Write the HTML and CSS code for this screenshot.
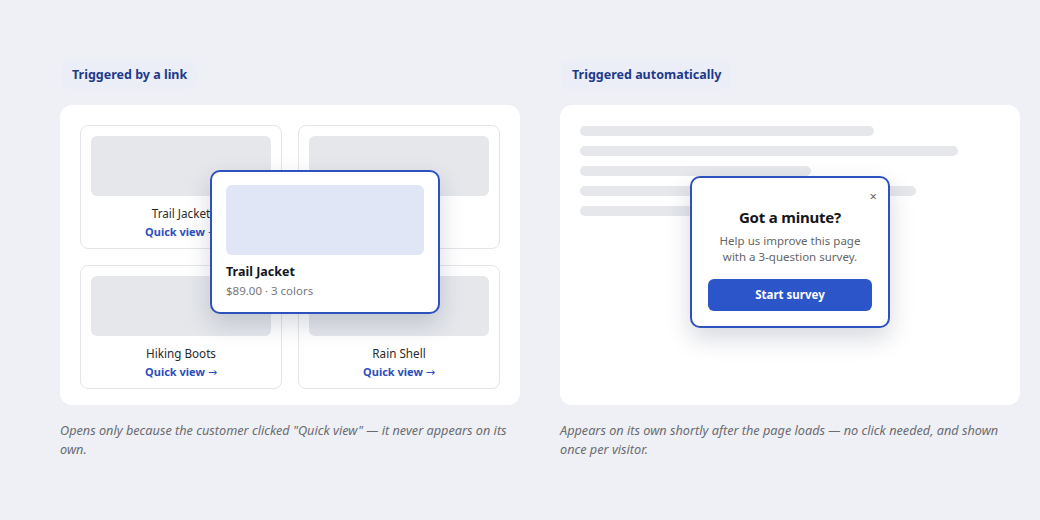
FILE: index.html
```html
<!DOCTYPE html>
<html>
<head>
<meta charset="utf-8">
<link rel="stylesheet" href="styles.css">
</head>
<body>
<div class="page">
  <section class="col">
    <div class="label">Triggered by a link</div>
    <div class="panel">
      <div class="grid">
        <div class="product"><div class="thumb"></div><div class="name">Trail Jacket</div><div class="qv">Quick view <span class="arrow">→</span></div></div>
        <div class="product"><div class="thumb"></div><div class="name">Trail Jacket</div><div class="qv">Quick view <span class="arrow">→</span></div></div>
        <div class="product"><div class="thumb"></div><div class="name">Hiking Boots</div><div class="qv">Quick view <span class="arrow">→</span></div></div>
        <div class="product"><div class="thumb"></div><div class="name">Rain Shell</div><div class="qv">Quick view <span class="arrow">→</span></div></div>
      </div>
      <div class="popover">
        <div class="pop-img"></div>
        <div class="pop-title">Trail Jacket</div>
        <div class="pop-sub">$89.00 · 3 colors</div>
      </div>
    </div>
    <p class="caption">Opens only because the customer clicked "Quick view" — it never appears on its own.</p>
  </section>
  <section class="col">
    <div class="label">Triggered automatically</div>
    <div class="panel panel-lines">
      <div class="line w1"></div>
      <div class="line w2"></div>
      <div class="line w3"></div>
      <div class="line w4"></div>
      <div class="line w5"></div>
      <div class="modal">
        <div class="close">×</div>
        <div class="modal-title">Got a minute?</div>
        <div class="modal-text">Help us improve this page with a 3-question survey.</div>
        <div class="btn">Start survey</div>
      </div>
    </div>
    <p class="caption">Appears on its own shortly after the page loads — no click needed, and shown once per visitor.</p>
  </section>
</div>
</body>
</html>
```
FILE: styles.css
```css
* { box-sizing: border-box; }
html, body { margin: 0; padding: 0; }
body {
  background: #eef0f5;
  font-family: "Noto Sans", "Open Sans", sans-serif;
  color: #222;
  width: 1040px;
  height: 520px;
  overflow: hidden;
}
.page {
  display: grid;
  grid-template-columns: 460px 460px;
  column-gap: 40px;
  padding: 61px 0 0 60px;
}
.label {
  display: inline-block;
  background: #ebeef6;
  color: #1e3a8a;
  font-weight: 700;
  font-size: 12.5px;
  line-height: 20px;
  padding: 4px 10px;
  border-radius: 8px;
  margin-left: 2px;
}
.panel {
  position: relative;
  margin-top: 16px;
  height: 300px;
  background: #fff;
  border-radius: 12px;
  padding: 20px;
}
.grid {
  display: grid;
  grid-template-columns: 1fr 1fr;
  gap: 16px;
}
.product {
  border: 1px solid #e3e5e9;
  border-radius: 8px;
  padding: 10px 10px 0;
  height: 124px;
  text-align: center;
}
.thumb {
  height: 60px;
  background: #e5e7eb;
  border-radius: 6px;
}
.name {
  margin-top: 8px;
  font-size: 11.7px;
  line-height: 18px;
  color: #2a2a2a;
}
.qv {
  margin-top: 1px;
  font-size: 11px;
  line-height: 18px;
  font-weight: 700;
  color: #2c4fbd;
}
.arrow {
  font-family: "DejaVu Sans", sans-serif;
  font-weight: 400;
  font-size: 11px;
}
.popover {
  position: absolute;
  left: 150px;
  top: 65px;
  width: 230px;
  height: 144px;
  background: #fff;
  border: 2px solid #2d52bd;
  border-radius: 10px;
  padding: 13px 14px;
  box-shadow: 0 10px 24px rgba(30, 40, 70, 0.18);
}
.pop-img {
  height: 70px;
  background: #e0e6f6;
  border-radius: 6px;
}
.pop-title {
  margin-top: 8px;
  font-size: 12.5px;
  line-height: 18px;
  font-weight: 700;
  color: #14161c;
}
.pop-sub {
  margin-top: 1px;
  font-size: 11.5px;
  line-height: 18px;
  color: #777;
}
.panel-lines {
  padding-top: 21px;
  display: flex;
  flex-direction: column;
  gap: 10px;
}
.line {
  height: 10px;
  border-radius: 5px;
  background: #e5e7eb;
}
.w1 { width: 294px; }
.w2 { width: 378px; }
.w3 { width: 231px; }
.w4 { width: 336px; }
.w5 { width: 280px; }
.modal {
  position: absolute;
  left: 130px;
  top: 71px;
  width: 200px;
  height: 152px;
  background: #fff;
  border: 2px solid #2d52bd;
  border-radius: 10px;
  padding: 20px 16px 0;
  text-align: center;
  box-shadow: 0 10px 24px rgba(30, 40, 70, 0.18);
}
.close {
  position: absolute;
  right: 11px;
  top: 10px;
  font-size: 13px;
  line-height: 16px;
  color: #666;
}
.modal-title {
  margin-top: 8px;
  font-size: 15px;
  letter-spacing: -0.2px;
  line-height: 22px;
  font-weight: 700;
  color: #14161c;
}
.modal-text {
  margin-top: 5px;
  font-size: 11.5px;
  line-height: 16px;
  color: #666;
}
.btn {
  margin-top: 14px;
  height: 32px;
  line-height: 32px;
  background: #2b55c9;
  color: #fff;
  border-radius: 6px;
  font-size: 11.5px;
  font-weight: 700;
}
.caption {
  margin: 16px 0 0;
  font-size: 12.7px;
  line-height: 19px;
  font-style: italic;
  color: #6b6b70;
}
```
